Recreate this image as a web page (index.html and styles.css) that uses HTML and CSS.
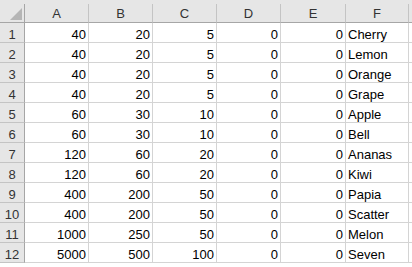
FILE: index.html
```html
<!DOCTYPE html>
<html lang="en">
<head>
  <meta charset="UTF-8">
  <title>Sheet</title>
  <link rel="stylesheet" href="styles.css">
</head>
<body>
<div class="sheet">
  <table class="grid">
    <colgroup>
      <col class="c-head">
      <col class="c-std">
      <col class="c-std">
      <col class="c-std">
      <col class="c-std">
      <col class="c-e">
      <col class="c-f">
      <col class="c-rest">
    </colgroup>
    <thead>
      <tr>
        <th class="corner">
          <svg width="12" height="12" viewBox="0 0 12 12"><polygon points="12,0 12,12 0,12" fill="#b5b5b5"/></svg>
        </th>
        <th>A</th><th>B</th><th>C</th><th>D</th><th>E</th><th>F</th><th class="rest"></th>
      </tr>
    </thead>
    <tbody id="rows"></tbody>
  </table>
</div>

<script>
  const data = [
    [40, 20, 5, 0, 0, 'Cherry'],
    [40, 20, 5, 0, 0, 'Lemon'],
    [40, 20, 5, 0, 0, 'Orange'],
    [40, 20, 5, 0, 0, 'Grape'],
    [60, 30, 10, 0, 0, 'Apple'],
    [60, 30, 10, 0, 0, 'Bell'],
    [120, 60, 20, 0, 0, 'Ananas'],
    [120, 60, 20, 0, 0, 'Kiwi'],
    [400, 200, 50, 0, 0, 'Papia'],
    [400, 200, 50, 0, 0, 'Scatter'],
    [1000, 250, 50, 0, 0, 'Melon'],
    [5000, 500, 100, 0, 0, 'Seven']
  ];
  const body = document.getElementById('rows');
  data.forEach((row, i) => {
    const tr = document.createElement('tr');
    let html = '<th>' + (i + 1) + '</th>';
    row.forEach((v) => {
      const cls = typeof v === 'number' ? 'num' : 'txt';
      html += '<td class="' + cls + '">' + v + '</td>';
    });
    html += '<td class="rest"></td>';
    tr.innerHTML = html;
    body.appendChild(tr);
  });
</script>
</body>
</html>
```

FILE: styles.css
```css
* {
  margin: 0;
  padding: 0;
  box-sizing: border-box;
}
body {
  background-color: #ffffff;
  font-family: "Liberation Sans", Arial, sans-serif;
  font-size: 13px;
  color: #000;
}
.sheet {
  background-color: #e6e6e6;
  padding-top: 4px;
  width: 412px;
  overflow: hidden;
}
.grid {
  table-layout: fixed;
  border-collapse: separate;
  border-spacing: 0;
  width: 412px;
}
.c-head { width: 25px; }
.c-std { width: 64px; }
.c-e { width: 65px; }
.c-f { width: 63px; }
.c-rest { width: 4px; }
.grid th,
.grid td {
  height: 20px;
  border-right: 1px solid #d4d4d4;
  border-bottom: 1px solid #d4d4d4;
  white-space: nowrap;
  overflow: hidden;
  line-height: 15px;
  padding: 0 2px;
  vertical-align: bottom;
}
.grid td {
  background-color: #fff;
}
.grid thead th {
  height: 19px;
  background-color: #e6e6e6;
  color: #333;
  font-weight: normal;
  text-align: center;
  border-right-color: #c4c4c4;
  border-bottom: 1px solid #a6a6a6;
  line-height: 15px;
  padding-bottom: 1px;
}
.grid tbody th {
  background-color: #e6e6e6;
  color: #333;
  font-weight: normal;
  text-align: center;
  border-right: 1px solid #a6a6a6;
  border-bottom-color: #c4c4c4;
}
.grid thead th.corner {
  border-right: 1px solid #a6a6a6;
  text-align: right;
  padding: 0 2px 2px 0;
  line-height: 0;
}
.grid thead th.rest {
  border-right: none;
}
.grid td.rest {
  border-right: none;
}
.num {
  text-align: right;
}
.txt {
  text-align: left;
}
```
